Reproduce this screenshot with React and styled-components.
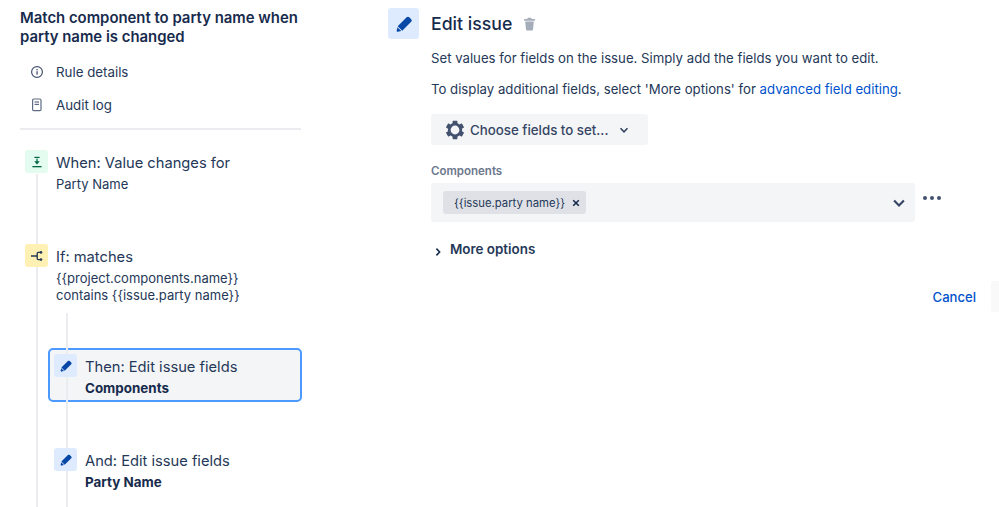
import React from "react";
import styled, { createGlobalStyle } from "styled-components";

const GlobalStyle = createGlobalStyle`
  html, body {
    margin: 0;
    padding: 0;
    background: #fff;
  }
  body {
    font-family: Inter, "Liberation Sans", sans-serif;
    color: #172b4d;
  }
`;

const Pencil = ({ size = 16 }) => (
  <svg width={size} height={size} viewBox="0 0 24 24" fill="#0747a6">
    <path d="M4.02 19.23a1 1 0 001.18 1.18l3.81-.78-4.21-4.21-.78 3.81zM19.844 6.707l-2.12-2.122A1.997 1.997 0 0016.308 4c-.512 0-1.024.195-1.415.585l-9.757 9.758 4.95 4.95 9.757-9.758a2 2 0 000-2.828z" />
  </svg>
);

const InfoIcon = () => (
  <svg width="14" height="14" viewBox="0 0 14 14" fill="none">
    <circle cx="7" cy="7" r="5.4" stroke="#42526e" strokeWidth="1.2" />
    <rect x="6.4" y="6.2" width="1.3" height="3.4" fill="#42526e" />
    <rect x="6.4" y="4" width="1.3" height="1.3" fill="#42526e" />
  </svg>
);

const AuditIcon = () => (
  <svg width="14" height="14" viewBox="0 0 14 14" fill="none">
    <rect x="2.6" y="1" width="8.4" height="11.6" rx="1.2" stroke="#5e6c84" strokeWidth="1.2" />
    <rect x="4.6" y="3.4" width="4.4" height="1.2" fill="#5e6c84" />
    <rect x="4.6" y="5.8" width="4.4" height="1.2" fill="#5e6c84" />
  </svg>
);

const TriggerIcon = () => (
  <svg width="12" height="12" viewBox="0 0 12 12" fill="#006644">
    <rect x="3.4" y="0.8" width="5.2" height="1.2" />
    <rect x="1.4" y="10" width="9.2" height="1.3" />
    <rect x="5.4" y="2.6" width="1.2" height="3.4" />
    <path d="M3.3 5.2h5.4L6 8.4z" />
  </svg>
);

const BranchIcon = () => (
  <svg width="14" height="12" viewBox="0 0 14 12" fill="none" stroke="#253858" strokeWidth="1.4">
    <path d="M1 6h6.2M10 2.4H8.2c-.6 0-1 .4-1 1v5.2c0 .6.4 1 1 1H10" />
    <circle cx="11" cy="2.4" r="1.3" fill="#253858" stroke="none" />
    <circle cx="11" cy="9.6" r="1.3" fill="#253858" stroke="none" />
  </svg>
);

const TrashIcon = () => (
  <svg width="13" height="14" viewBox="0 0 13 14" fill="#a5adba">
    <rect x="1" y="2" width="11" height="1.8" rx="0.5" />
    <rect x="4.5" y="0.8" width="4" height="1.6" rx="0.5" />
    <path d="M2.2 4.6h8.6l-.8 8a1 1 0 01-1 .9H4a1 1 0 01-1-.9z" />
  </svg>
);

const GearIcon = () => (
  <svg width="20" height="20" viewBox="0 0 20 20" fill="none">
    <circle cx="10" cy="10" r="5.8" stroke="#42526e" strokeWidth="2.8" />
    {[0, 60, 120, 180, 240, 300].map((deg) => (
      <rect key={deg} x="7.6" y="0.8" width="4.8" height="3.2" rx="0.6" fill="#42526e" transform={`rotate(${deg} 10 10)`} />
    ))}
  </svg>
);

const Chevron = ({ size = 10, weight = 1.6 }) => (
  <svg width={size} height={size} viewBox="0 0 10 10" fill="none" stroke="#344563" strokeWidth={weight}>
    <path d="M1.5 3.2L5 6.8l3.5-3.6" />
  </svg>
);

const ChevronRight = () => (
  <svg width="8" height="10" viewBox="0 0 8 10" fill="none" stroke="#172b4d" strokeWidth="1.6">
    <path d="M2.4 1.6L5.6 5 2.4 8.4" />
  </svg>
);

const CloseIcon = () => (
  <svg width="8" height="8" viewBox="0 0 8 8" stroke="#172b4d" strokeWidth="1.6">
    <path d="M1.2 1.2l5.6 5.6M6.8 1.2L1.2 6.8" />
  </svg>
);

const App = () => {
  return (
    <Page>
      <GlobalStyle />
      <Sidebar>
        <RuleTitle>Match component to party name when party name is changed</RuleTitle>
        <NavList>
          <NavItem>
            <NavIcon><InfoIcon /></NavIcon>
            Rule details
          </NavItem>
          <NavItem>
            <NavIcon><AuditIcon /></NavIcon>
            Audit log
          </NavItem>
        </NavList>
        <Divider />
        <Steps>
          <Step $gap={51}>
            <StepIcon $bg="#e3fcef"><TriggerIcon /></StepIcon>
            <StepText>
              <StepTitle>When: Value changes for</StepTitle>
              <StepDetail>Party Name</StepDetail>
            </StepText>
          </Step>
          <Step $gap={44}>
            <StepIcon $bg="#fff0b3"><BranchIcon /></StepIcon>
            <StepText>
              <StepTitle>If: matches</StepTitle>
              <StepDetail>
                {"{{project.components.name}}"}
                <br />
                {"contains {{issue.party name}}"}
              </StepDetail>
            </StepText>
          </Step>
          <Nested>
            <Step $nested $selected $gap={40}>
              <StepIcon $bg="#deebff"><Pencil /></StepIcon>
              <StepText>
                <StepTitle>Then: Edit issue fields</StepTitle>
                <StepDetail $bold>Components</StepDetail>
              </StepText>
            </Step>
            <Step $nested>
              <StepIcon $bg="#deebff"><Pencil /></StepIcon>
              <StepText>
                <StepTitle>And: Edit issue fields</StepTitle>
                <StepDetail $bold>Party Name</StepDetail>
              </StepText>
            </Step>
          </Nested>
        </Steps>
      </Sidebar>
      <Main>
        <Header>
          <HeaderIcon><Pencil size={22} /></HeaderIcon>
          <Heading>Edit issue</Heading>
          <TrashIcon />
        </Header>
        <Content>
          <Paragraph>Set values for fields on the issue. Simply add the fields you want to edit.</Paragraph>
          <Paragraph>
            To display additional fields, select 'More options' for <Link>advanced field editing</Link>.
          </Paragraph>
          <ChooseButton>
            <GearIcon />
            <span>Choose fields to set...</span>
            <ChooseChevron><Chevron /></ChooseChevron>
          </ChooseButton>
          <FieldLabel>Components</FieldLabel>
          <FieldRow>
            <Select>
              <Tag>
                <TagLabel>{"{{issue.party name}}"}</TagLabel>
                <CloseIcon />
              </Tag>
              <Chevron size={14} weight={1.5} />
            </Select>
            <Dots>
              <i /><i /><i />
            </Dots>
          </FieldRow>
          <MoreOptions>
            <ChevronRight />
            More options
          </MoreOptions>
          <Actions>
            <Cancel>Cancel</Cancel>
            <SaveStub />
          </Actions>
        </Content>
      </Main>
    </Page>
  );
};

export default App;

const Page = styled.div`
  width: 999px;
  height: 507px;
  display: flex;
  overflow: hidden;
`;

const Sidebar = styled.div`
  width: 281px;
  margin-left: 20px;
  padding-top: 9px;
  flex-shrink: 0;
`;

const RuleTitle = styled.div`
  font-size: 14.9px;
  line-height: 19px;
  font-weight: 600;
  color: #172b4d;
`;

const NavList = styled.div`
  margin-top: 8px;
`;

const NavItem = styled.div`
  height: 33px;
  display: flex;
  align-items: center;
  font-size: 13.3px;
  color: #253858;
`;

const NavIcon = styled.span`
  width: 14px;
  height: 14px;
  display: flex;
  margin: 0 12px 0 10px;
`;

const Divider = styled.div`
  height: 2px;
  margin-top: 7px;
  background: #ebecf0;
`;

const Steps = styled.div`
  position: relative;
  padding-top: 20px;
  &::before {
    content: "";
    position: absolute;
    left: 16px;
    top: 44px;
    bottom: -200px;
    width: 2px;
    background: #ebecf0;
  }
`;

const Nested = styled.div`
  position: relative;
  margin-left: 28px;
  width: 254px;
  &::after {
    content: "";
    position: absolute;
    left: 18px;
    top: -35px;
    bottom: -100px;
    width: 2px;
    background: #ebecf0;
  }
`;

const Step = styled.div`
  position: relative;
  display: flex;
  gap: 8px;
  box-sizing: border-box;
  margin-bottom: ${(p) => p.$gap || 0}px;
  padding: ${(p) => (p.$nested ? "4px 4px 3px" : "0 0 0 5px")};
  border: 2px solid ${(p) => (p.$selected ? "#4c9aff" : "transparent")};
  border-width: ${(p) => (p.$nested ? "2px" : "0")};
  border-radius: 5px;
  background: ${(p) => (p.$selected ? "#f4f5f7" : "transparent")};
`;

const StepIcon = styled.span`
  position: relative;
  z-index: 1;
  width: 23px;
  height: 23px;
  flex-shrink: 0;
  border-radius: 3px;
  display: flex;
  align-items: center;
  justify-content: center;
  background: ${(p) => p.$bg};
`;

const StepText = styled.div`
  padding-top: 3px;
`;

const StepTitle = styled.div`
  font-size: 14.7px;
  line-height: 20px;
  color: #253858;
`;

const StepDetail = styled.div`
  margin-top: 3px;
  font-size: ${(p) => (p.$bold ? 13.4 : 13)}px;
  line-height: 17px;
  font-weight: ${(p) => (p.$bold ? 700 : 400)};
  color: ${(p) => (p.$bold ? "#172b4d" : "#253858")};
`;

const Main = styled.div`
  flex: 1;
  margin-left: 87px;
  padding-top: 8px;
  min-width: 0;
`;

const Header = styled.div`
  display: flex;
  align-items: center;
  height: 31px;
`;

const HeaderIcon = styled.span`
  width: 31px;
  height: 31px;
  border-radius: 3px;
  background: #deebff;
  display: flex;
  align-items: center;
  justify-content: center;
`;

const Heading = styled.h1`
  margin: 0 11px 0 12px;
  font-size: 17.7px;
  line-height: 31px;
  font-weight: 500;
  color: #172b4d;
`;

const Content = styled.div`
  margin-left: 43px;
  padding-top: 11px;
`;

const Paragraph = styled.p`
  margin: 0 0 14px;
  font-size: 13.2px;
  line-height: 17px;
  color: #253858;
`;

const Link = styled.span`
  color: #0052cc;
`;

const ChooseButton = styled.div`
  width: 217px;
  height: 31px;
  box-sizing: border-box;
  padding-left: 14px;
  margin-top: 16px;
  display: flex;
  align-items: center;
  gap: 5px;
  border-radius: 3px;
  background: #f4f5f7;
  font-size: 13.3px;
  font-weight: 500;
  color: #344563;
`;

const ChooseChevron = styled.span`
  display: flex;
  margin-left: 6px;
`;

const FieldLabel = styled.div`
  margin-top: 19px;
  font-size: 11.5px;
  line-height: 14px;
  font-weight: 600;
  color: #6b778c;
`;

const FieldRow = styled.div`
  display: flex;
  align-items: flex-start;
  margin-top: 5px;
`;

const Select = styled.div`
  width: 484px;
  height: 39px;
  box-sizing: border-box;
  padding: 0 9px 0 12px;
  display: flex;
  align-items: center;
  justify-content: space-between;
  border-radius: 3px;
  background: #f4f5f7;
`;

const Tag = styled.div`
  width: 143px;
  height: 23px;
  box-sizing: border-box;
  padding: 0 6px 0 11px;
  display: flex;
  align-items: center;
  justify-content: space-between;
  border-radius: 3px;
  background: #dfe1e6;
`;

const TagLabel = styled.span`
  font-size: 11.3px;
  color: #253858;
`;

const Dots = styled.div`
  display: flex;
  gap: 3px;
  margin: 13px 0 0 8px;
  i {
    width: 4px;
    height: 4px;
    border-radius: 50%;
    background: #42526e;
  }
`;

const MoreOptions = styled.div`
  margin-top: 19px;
  display: flex;
  align-items: center;
  gap: 8px;
  font-size: 13.4px;
  line-height: 17px;
  font-weight: 600;
  color: #253858;
  svg {
    margin: 5px 0 0 3px;
  }
`;

const Actions = styled.div`
  margin-top: 23px;
  display: flex;
  align-items: center;
  justify-content: flex-end;
`;

const Cancel = styled.span`
  margin-right: 15px;
  font-size: 13.1px;
  font-weight: 500;
  color: #0052cc;
`;

const SaveStub = styled.div`
  width: 8px;
  height: 31px;
  border-radius: 3px 0 0 3px;
  background: #f9f9fa;
`;
